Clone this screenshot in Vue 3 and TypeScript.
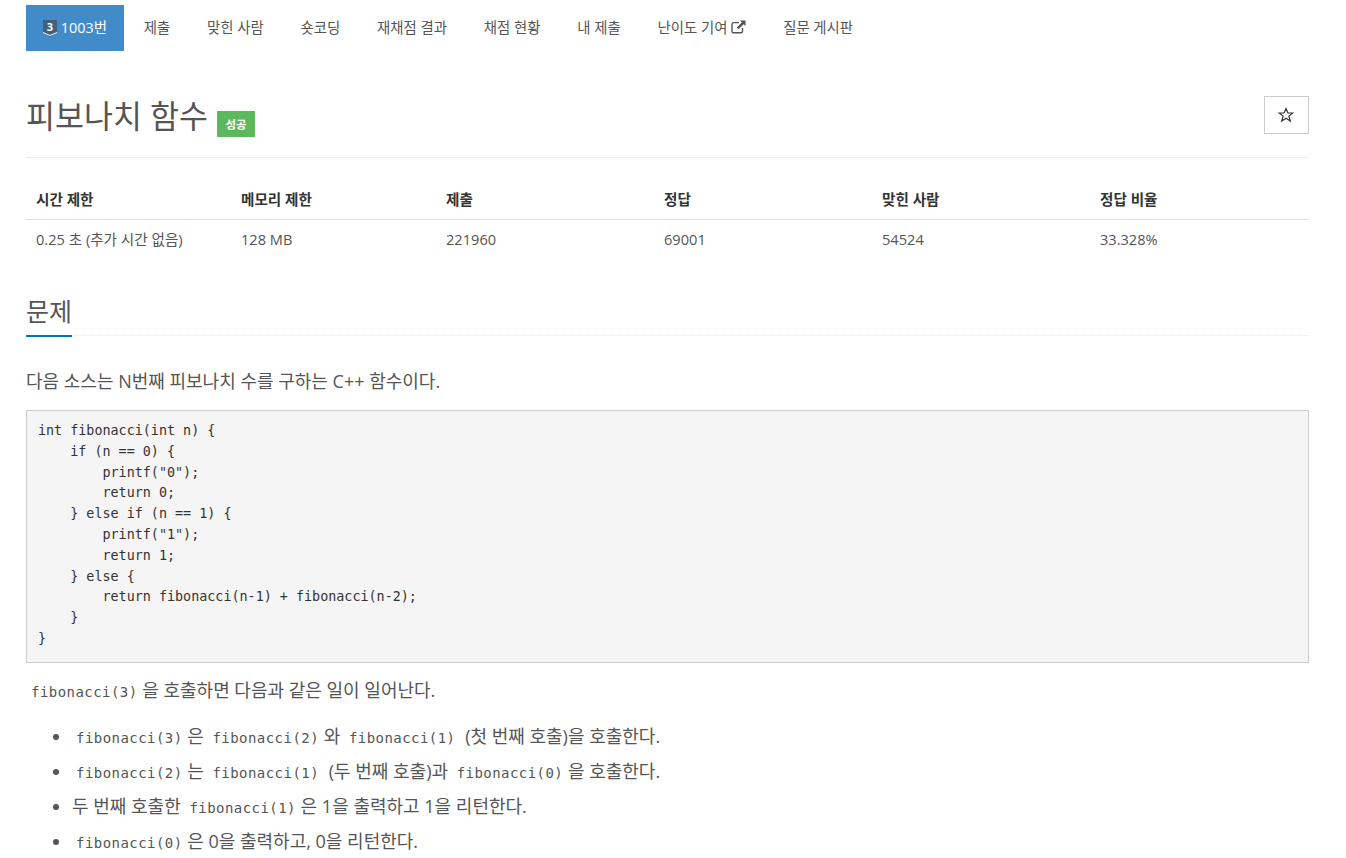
<script setup lang="ts">
const tabs = ['제출', '맞힌 사람', '숏코딩', '재채점 결과', '채점 현황', '내 제출']
const heads = ['시간 제한', '메모리 제한', '제출', '정답', '맞힌 사람', '정답 비율']
const cells = ['0.25 초 (추가 시간 없음)', '128 MB', '221960', '69001', '54524', '33.328%']
const source = `int fibonacci(int n) {
    if (n == 0) {
        printf("0");
        return 0;
    } else if (n == 1) {
        printf("1");
        return 1;
    } else {
        return fibonacci(n-1) + fibonacci(n-2);
    }
}`
</script>

<template>
  <div class="page">
    <ul class="tabs">
      <li class="tab active">
        <span class="tier">
          <svg viewBox="0 0 14 17" width="14" height="17">
            <path d="M0 0H14V12.5L7 17L0 12.5Z" fill="#435f7a" />
            <path d="M0 12.5L7 15.5L14 12.5" fill="none" stroke="#fff" stroke-width="1" />
          </svg>
          <span class="tier-num">3</span>
        </span>
        1003번
      </li>
      <li v-for="tab in tabs" :key="tab" class="tab">{{ tab }}</li>
      <li class="tab">
        난이도 기여
        <svg class="ext" viewBox="0 0 15 14" width="15" height="14">
          <path d="M11.5 8V11.2C11.5 12.2 10.8 12.8 9.9 12.8H2.6C1.7 12.8 1 12.2 1 11.2V4.2C1 3.3 1.7 2.6 2.6 2.6H8" fill="none" stroke="#555" stroke-width="1.4" />
          <path d="M9 0.5H14.5V6L12.6 4.2L7.6 9.2L5.8 7.4L10.8 2.4Z" fill="#555" />
        </svg>
      </li>
      <li class="tab">질문 게시판</li>
    </ul>

    <div class="title-row">
      <h1 class="title">피보나치 함수</h1>
      <span class="badge">성공</span>
      <button class="star">
        <svg viewBox="0 0 16 16" width="16" height="16">
          <path d="M8 1.6L9.9 6H14.8L10.9 9.1L12.3 14L8 11.2L3.7 14L5.1 9.1L1.2 6H6.1Z" fill="none" stroke="#333" stroke-width="1.2" stroke-linejoin="miter" />
        </svg>
      </button>
    </div>

    <div class="info">
      <div v-for="h in heads" :key="h" class="info-head">{{ h }}</div>
      <div v-for="c in cells" :key="c" class="info-cell">{{ c }}</div>
    </div>

    <div class="section">
      <h2 class="section-title">문제</h2>
    </div>

    <p class="para first">다음 소스는 N번째 피보나치 수를 구하는 C++ 함수이다.</p>
    <pre class="source">{{ source }}</pre>
    <p class="para"><code>fibonacci(3)</code> 을 호출하면 다음과 같은 일이 일어난다.</p>
    <ul class="calls">
      <li><code>fibonacci(3)</code> 은 <code>fibonacci(2)</code> 와 <code class="paren">fibonacci(1)</code> (첫 번째 호출)을 호출한다.</li>
      <li><code>fibonacci(2)</code> 는 <code class="paren">fibonacci(1)</code> (두 번째 호출)과 <code>fibonacci(0)</code> 을 호출한다.</li>
      <li>두 번째 호출한 <code>fibonacci(1)</code> 은 1을 출력하고 1을 리턴한다.</li>
      <li><code>fibonacci(0)</code> 은 0을 출력하고, 0을 리턴한다.</li>
    </ul>
  </div>
</template>

<style>
html,
body {
  margin: 0;
  overflow: hidden;
  background: #fff;
}
</style>

<style scoped>
.page {
  box-sizing: border-box;
  width: 1283px;
  margin-left: 26px;
  padding-top: 5px;
  font-family: "Open Sans", "Noto Sans CJK KR", sans-serif;
  font-size: 14.6px;
  color: #555;
}

.tabs {
  display: flex;
  list-style: none;
  margin: 0;
  padding: 0;
  font-size: 14.4px;
}

.tab {
  display: flex;
  align-items: center;
  gap: 4px;
  height: 46px;
  padding: 0 18.4px;
  white-space: nowrap;
  line-height: 20px;
}

.tab.active {
  gap: 4px;
  padding: 0 16.8px;
  margin-right: 1.6px;
  background: #428bca;
  color: #fff;
}

.tier {
  position: relative;
  display: block;
  width: 14px;
  height: 17px;
  margin-top: 1px;
}

.tier svg {
  display: block;
}

.tier-num {
  position: absolute;
  top: -1px;
  left: 0;
  width: 14px;
  text-align: center;
  font-size: 11px;
  font-weight: 700;
  line-height: 16px;
  color: #fff;
}

.ext {
  margin-top: -2px;
}

.title-row {
  display: flex;
  align-items: flex-end;
  height: 106px;
  border-bottom: 1px solid #eee;
}

.title {
  margin: 0 9px 21px 0;
  font-size: 31.5px;
  font-weight: 400;
  line-height: 40px;
  color: #555;
}

.badge {
  display: flex;
  align-items: center;
  justify-content: center;
  width: 38px;
  height: 26px;
  margin-bottom: 20px;
  background: #5cb85c;
  color: #fff;
  font-size: 11.5px;
  font-weight: 700;
}

.star {
  display: flex;
  align-items: center;
  justify-content: center;
  box-sizing: border-box;
  width: 45px;
  height: 38px;
  margin: 0 0 23px auto;
  padding: 0 1px 1px 0;
  background: #fff;
  border: 1px solid #ccc;
}

.info {
  display: grid;
  grid-template-columns: 205px 205px 218px 218px 218px 219px;
  margin-top: 21px;
}

.info-head {
  height: 40px;
  padding: 0 10px;
  line-height: 40px;
  font-weight: 700;
  color: #333;
  border-bottom: 1px solid #ddd;
}

.info-cell {
  height: 40px;
  padding: 0 10px;
  line-height: 38px;
}

.section {
  margin-top: 27px;
  border-bottom: 1px dotted #e8e8e8;
  height: 48px;
}

.section-title {
  display: inline-block;
  box-sizing: border-box;
  height: 50px;
  margin: 0;
  font-size: 25px;
  font-weight: 400;
  line-height: 48px;
  border-bottom: 2px solid #0076c0;
}

.para {
  margin: 0;
  font-size: 18px;
  line-height: 28px;
}

.para.first {
  margin-top: 31px;
}

.source {
  box-sizing: border-box;
  height: 253px;
  margin: 15px 0 13px;
  padding: 10px 11px;
  background: #f5f5f5;
  border: 1px solid #ccc;
  font-family: "DejaVu Sans Mono", monospace;
  font-size: 13.4px;
  line-height: 20.8px;
  color: #333;
  overflow: hidden;
}

code {
  padding: 2px 0 2px 4px;
  font-family: "DejaVu Sans Mono", monospace;
  font-size: 14px;
  letter-spacing: 0.45px;
  color: #555;
}

code.paren {
  padding-right: 5px;
}

.para code {
  margin-left: 1px;
}

.calls {
  margin: 13px 0 0;
  padding-left: 46px;
  font-size: 18px;
}

.calls li {
  height: 35px;
  line-height: 35px;
}
</style>
